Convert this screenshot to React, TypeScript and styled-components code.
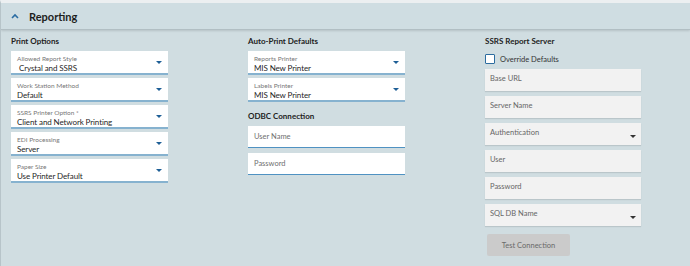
import React from "react";
import styled, { createGlobalStyle } from "styled-components";

const GlobalStyle = createGlobalStyle`
  html, body {
    margin: 0;
    padding: 0;
    background: #d0dde1;
    font-family: "Lato", "Open Sans", sans-serif;
  }
`;

const Page = styled.div`
  width: 690px;
  height: 266px;
  box-sizing: border-box;
  border-top: 3px solid #eceff1;
  border-left: 1px solid #b7c4c9;
  background: #d0dde1;
  overflow: hidden;
`;

const Header = styled.div`
  height: 27px;
  box-sizing: border-box;
  display: flex;
  align-items: center;
  gap: 10px;
  padding-left: 10px;
  background: #cfdde2;
  border-bottom: 1px solid #b1bec3;
  box-shadow: 0 1px 2px rgba(0, 0, 0, 0.12);
`;

const Title = styled.span`
  font-size: 11px;
  font-weight: 700;
  color: #1d1d1d;
`;

const Body = styled.div`
  display: grid;
  grid-template-columns: 237px 237px 1fr;
  padding: 5px 0 0 10px;
`;

const Column = styled.div`
  display: flex;
  flex-direction: column;
`;

const Heading = styled.div<{ $top?: number }>`
  font-size: 8px;
  font-weight: 700;
  color: #222;
  line-height: 12px;
  margin-top: ${(p) => p.$top ?? 0}px;
  margin-bottom: 4px;
`;

const Stack = styled.div<{ $gap: number }>`
  display: flex;
  flex-direction: column;
  gap: ${(p) => p.$gap}px;
`;

const SelectBox = styled.div`
  position: relative;
  width: 157px;
  height: 24px;
  box-sizing: border-box;
  background: #fff;
  border-bottom: 2px solid #86b2cf;
  padding: 3px 0 0 6px;
  display: flex;
  flex-direction: column;
`;

const SelectLabel = styled.span`
  font-size: 6.5px;
  line-height: 9px;
  color: #777;
`;

const SelectValue = styled.span`
  font-size: 8px;
  line-height: 10px;
  letter-spacing: -0.1px;
  color: #1f1f1f;
  white-space: pre;
`;

const Caret = styled.span<{ $dark?: boolean }>`
  position: absolute;
  right: 6px;
  top: 10px;
  width: 0;
  height: 0;
  border-left: 3px solid transparent;
  border-right: 3px solid transparent;
  border-top: 3px solid ${(p) => (p.$dark ? "#333" : "#1e5f96")};
`;

const TextField = styled.div`
  width: 157px;
  height: 22px;
  box-sizing: border-box;
  background: #fff;
  border-bottom: 1px solid #4f92c2;
  padding-left: 6px;
  display: flex;
  align-items: center;
  font-size: 7.5px;
  color: #6f6f6f;
`;

const CheckRow = styled.label`
  display: flex;
  align-items: center;
  gap: 5px;
  height: 10px;
  margin: 3px 0 5px;
  font-size: 7.5px;
  color: #333;
`;

const CheckBox = styled.span`
  width: 10px;
  height: 10px;
  box-sizing: border-box;
  border: 1.5px solid #2c6c9f;
  border-radius: 1px;
  background: #fff;
`;

const GreyField = styled.div`
  position: relative;
  width: 156px;
  height: 22px;
  box-sizing: border-box;
  background: #f2f2f2;
  box-shadow: 0 1px 1px rgba(0, 0, 0, 0.1);
  padding: 5px 0 0 5px;
  font-size: 7.5px;
  line-height: 10px;
  color: #666;

  ${Caret} {
    top: 12px;
    right: 5px;
  }
`;

const TestButton = styled.button`
  width: 83px;
  height: 22px;
  margin: 8px 0 0 2px;
  border: none;
  border-radius: 2px;
  background: #cbcbcb;
  color: #6a6a6a;
  font-family: inherit;
  font-size: 7.5px;
`;

const Chevron = () => (
  <svg width="8" height="6" viewBox="0 0 8 6">
    <path d="M1 5 L4 2 L7 5" fill="none" stroke="#2a6ca3" strokeWidth="1.6" />
  </svg>
);

const Select = ({ label, value }: { label: string; value: string }) => (
  <SelectBox>
    <SelectLabel>{label}</SelectLabel>
    <SelectValue>{value}</SelectValue>
    <Caret />
  </SelectBox>
);

const Grey = ({ text, dropdown }: { text: string; dropdown?: boolean }) => (
  <GreyField>
    {text}
    {dropdown && <Caret $dark />}
  </GreyField>
);

export default function App() {
  return (
    <Page>
      <GlobalStyle />
      <Header>
        <Chevron />
        <Title>Reporting</Title>
      </Header>
      <Body>
        <Column>
          <Heading>Print Options</Heading>
          <Stack $gap={3}>
            <Select label="Allowed Report Style" value=" Crystal and SSRS" />
            <Select label="Work Station Method" value="Default" />
            <Select label="SSRS Printer Option *" value="Client and Network Printing" />
            <Select label="EDI Processing" value="Server" />
            <Select label="Paper Size" value="Use Printer Default" />
          </Stack>
        </Column>
        <Column>
          <Heading>Auto-Print Defaults</Heading>
          <Stack $gap={3}>
            <Select label="Reports Printer" value="MIS New Printer" />
            <Select label="Labels Printer" value="MIS New Printer" />
          </Stack>
          <Heading $top={8}>ODBC Connection</Heading>
          <Stack $gap={5}>
            <TextField>User Name</TextField>
            <TextField>Password</TextField>
          </Stack>
        </Column>
        <Column>
          <Heading>SSRS Report Server</Heading>
          <CheckRow>
            <CheckBox />
            Override Defaults
          </CheckRow>
          <Stack $gap={5}>
            <Grey text="Base URL" />
            <Grey text="Server Name" />
            <Grey text="Authentication" dropdown />
            <Grey text="User" />
            <Grey text="Password" />
            <Grey text="SQL DB Name" dropdown />
          </Stack>
          <div>
            <TestButton>Test Connection</TestButton>
          </div>
        </Column>
      </Body>
    </Page>
  );
}
